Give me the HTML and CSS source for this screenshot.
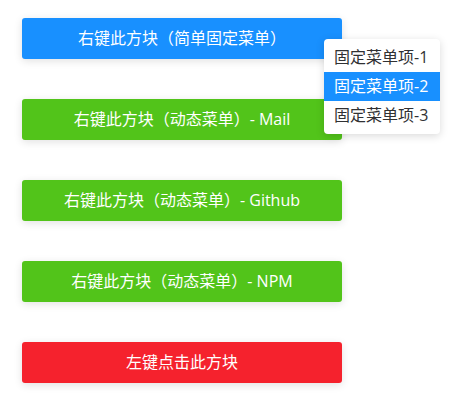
FILE: index.html
```html
<!DOCTYPE html>
<html>
<head>
<meta charset="utf-8">
<link rel="stylesheet" href="styles.css">
</head>
<body>
<div class="page">
  <div class="block blue">右键此方块（简单固定菜单）</div>
  <div class="block green">右键此方块（动态菜单）- Mail</div>
  <div class="block green">右键此方块（动态菜单）- Github</div>
  <div class="block green">右键此方块（动态菜单）- NPM</div>
  <div class="block red">左键点击此方块</div>
</div>
<ul class="menu">
  <li class="item">固定菜单项-1</li>
  <li class="item active">固定菜单项-2</li>
  <li class="item">固定菜单项-3</li>
</ul>
</body>
</html>
```
FILE: styles.css
```css
html, body {
  margin: 0;
  padding: 0;
  background: #fff;
  font-family: "Open Sans", "Noto Sans CJK SC", sans-serif;
}
.page {
  padding: 18px 22px;
  display: flex;
  flex-direction: column;
  gap: 40px;
}
.block {
  width: 320px;
  height: 41px;
  line-height: 41px;
  text-align: center;
  color: #fff;
  font-size: 16px;
  border-radius: 3px;
  box-shadow: 0 2px 8px rgba(0, 0, 0, 0.12);
}
.blue { background: #1890ff; }
.green { background: #52c41a; }
.red { background: #f5222d; }
.menu {
  position: absolute;
  left: 324px;
  top: 39px;
  width: 116px;
  margin: 0;
  padding: 4px 0;
  list-style: none;
  background: #fff;
  border-radius: 4px;
  box-shadow: 0 2px 8px rgba(0, 0, 0, 0.15);
}
.item {
  height: 29px;
  line-height: 29px;
  padding: 0 10px;
  font-size: 16px;
  color: #303133;
  white-space: nowrap;
}
.item.active {
  background: #1890ff;
  color: #fff;
}
```
